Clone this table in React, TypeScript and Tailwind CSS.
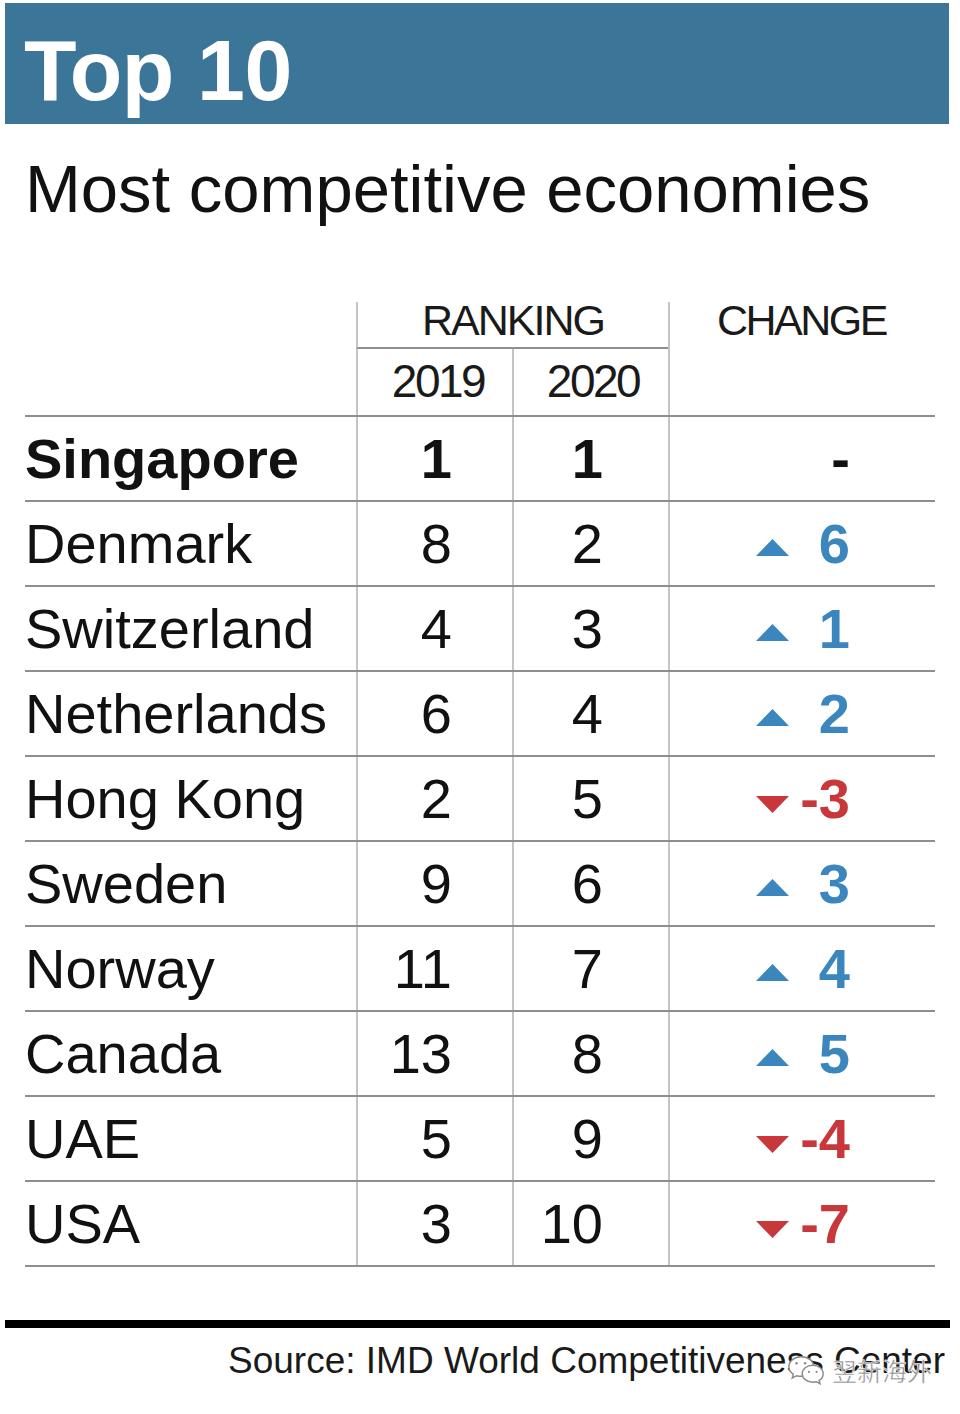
import React from "react";

type Row = { name: string; y19: string; y20: string; change: string; dir: "up" | "down" | "none"; bold?: boolean };

const rows: Row[] = [
  { name: "Singapore", y19: "1", y20: "1", change: "-", dir: "none", bold: true },
  { name: "Denmark", y19: "8", y20: "2", change: "6", dir: "up" },
  { name: "Switzerland", y19: "4", y20: "3", change: "1", dir: "up" },
  { name: "Netherlands", y19: "6", y20: "4", change: "2", dir: "up" },
  { name: "Hong Kong", y19: "2", y20: "5", change: "-3", dir: "down" },
  { name: "Sweden", y19: "9", y20: "6", change: "3", dir: "up" },
  { name: "Norway", y19: "11", y20: "7", change: "4", dir: "up" },
  { name: "Canada", y19: "13", y20: "8", change: "5", dir: "up" },
  { name: "UAE", y19: "5", y20: "9", change: "-4", dir: "down" },
  { name: "USA", y19: "3", y20: "10", change: "-7", dir: "down" },
];

const font = { fontFamily: '"Liberation Sans", Arial, sans-serif' };

function Tri({ dir }: { dir: "up" | "down" | "none" }) {
  if (dir === "none") return <span className="w-[33px] h-[17px] mr-[6px]" />;
  if (dir === "up")
    return (
      <svg width="33" height="17" viewBox="0 0 33 17" className="mr-[6px] translate-y-[4px]">
        <polygon points="16.5,0 33,17 0,17" fill="#3b86bd" />
      </svg>
    );
  return (
    <svg width="33" height="17" viewBox="0 0 33 17" className="mr-[6px] translate-y-[6px]">
      <polygon points="0,0 33,0 16.5,17" fill="#c8383b" />
    </svg>
  );
}

function WeChat() {
  return (
    <svg width="40" height="32" viewBox="0 0 42 32" fill="none">
      <path d="M15 2C7.5 2 2 6.8 2 12.5c0 3.3 1.8 6 4.6 7.9L5.5 24.5l4.6-2.5c1.5.4 3.1.6 4.9.6 7.5 0 13-4.8 13-10.3S22.5 2 15 2z" fill="white" stroke="#8a8a8a" strokeWidth="1.5" />
      <path d="M27 11c-6.4 0-11 4.1-11 8.9s4.6 8.9 11 8.9c1.3 0 2.6-.2 3.8-.5l3.9 2.1-1-3.4c2.6-1.6 4.3-4.1 4.3-7.1 0-4.8-4.6-8.9-11-8.9z" fill="white" stroke="#8a8a8a" strokeWidth="1.5" />
      <circle cx="10" cy="9" r="1.3" fill="#8a8a8a" />
      <circle cx="19" cy="9" r="1.3" fill="#8a8a8a" />
      <circle cx="23" cy="18" r="1.1" fill="#8a8a8a" />
      <circle cx="31" cy="18" r="1.1" fill="#8a8a8a" />
    </svg>
  );
}

export default function App() {
  return (
    <div className="w-[960px] min-h-[1414px] bg-white text-[#111]" style={font}>
      <div className="pt-[3px] pl-[5px]">
        <div className="w-[944px] h-[121px] bg-[#3b7699] pt-[24px] pl-[19px]">
          <div className="text-white font-bold text-[86px] leading-none tracking-[-0.5px]">Top 10</div>
        </div>
      </div>

      <div className="mt-[31px] pl-[25px] text-[67px] leading-none text-[#111]">
        Most competitive economies
      </div>

      <div className="mt-[80px] ml-[25px] w-[910px]">
        {/* header */}
        <div className="grid grid-cols-[331px_156px_156px_267px] grid-rows-[47px_66px] border-b-2 border-[#8e8e8e]">
          <div className="row-span-2" />
          <div className="col-span-2 border-l-2 border-b-2 border-l-[#c4c4c4] border-b-[#8e8e8e] text-center text-[43px] leading-[37px] tracking-[-2px] text-[#1a1a1a]">
            RANKING
          </div>
          <div className="row-span-2 border-l-2 border-[#c4c4c4] text-center text-[43px] leading-[37px] tracking-[-2.5px] text-[#1a1a1a] pr-[2px]">
            CHANGE
          </div>
          <div className="border-l-2 border-[#c4c4c4] text-center text-[46px] leading-[64px] tracking-[-2.5px] text-[#1a1a1a] pl-[6px]">
            2019
          </div>
          <div className="border-l-2 border-[#c4c4c4] text-center text-[46px] leading-[64px] tracking-[-2.5px] text-[#1a1a1a] pl-[4px]">
            2020
          </div>
        </div>

        {rows.map((r) => (
          <div
            key={r.name}
            className="grid grid-cols-[331px_156px_156px_267px] h-[85px] border-b-2 border-[#8e8e8e] text-[56px] leading-[83px]"
          >
            <div className={r.bold ? "font-bold" : ""}>{r.name}</div>
            <div className={`border-l-2 border-[#c4c4c4] text-right pr-[60px] ${r.bold ? "font-bold" : ""}`}>{r.y19}</div>
            <div className={`border-l-2 border-[#c4c4c4] text-right pr-[65px] ${r.bold ? "font-bold" : ""}`}>{r.y20}</div>
            <div className="border-l-2 border-[#c4c4c4] flex items-center justify-end pr-[85px]">
              <Tri dir={r.dir} />
              <span
                className={`w-[55px] text-right font-bold ${
                  r.dir === "up" ? "text-[#3b86bd]" : r.dir === "down" ? "text-[#c8383b]" : "text-[#111]"
                }`}
              >
                {r.change}
              </span>
            </div>
          </div>
        ))}
      </div>

      <div className="mt-[53px] ml-[5px] w-[945px] h-[8px] bg-black" />
      <div className="relative ml-[5px] w-[945px] mt-[14px] pr-[5px] text-right text-[37px] leading-none text-[#1a1a1a]">
        Source: IMD World Competitiveness Center
        <div className="absolute left-[782px] top-[12px] flex items-center">
          <WeChat />
          <span
            className="ml-[5px] text-[25px] leading-none text-[#8a8a8a]"
            style={{ fontFamily: '"Noto Sans CJK SC", sans-serif', WebkitTextStroke: "0.5px white" }}
          >
            翌新海外
          </span>
        </div>
      </div>
    </div>
  );
}
